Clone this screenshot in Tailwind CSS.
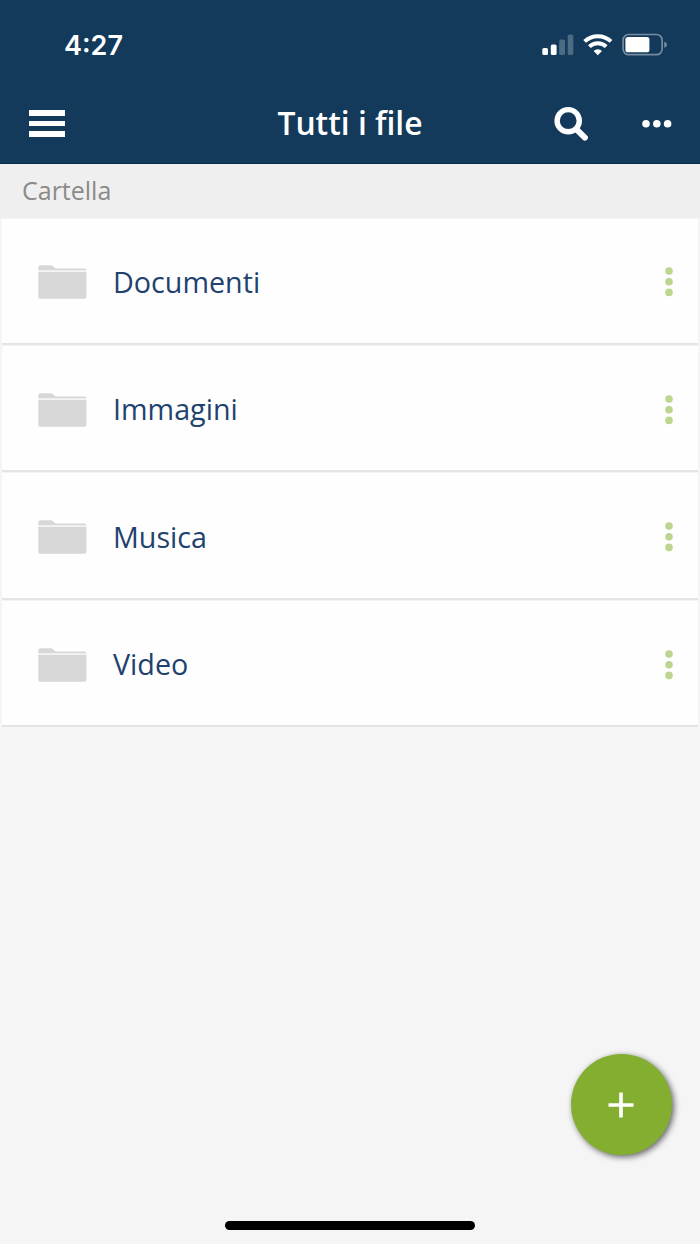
<!DOCTYPE html>
<html lang="it">
  <head>
    <meta charset="utf-8" />
    <title>Tutti i file</title>
    <script src="https://cdn.jsdelivr.net/npm/@tailwindcss/browser@4"></script>
  </head>
  <body class="bg-[#f5f5f5]">
    <div class="relative flex flex-col w-[700px] h-[1244px] overflow-hidden bg-[#f5f5f5] font-['Open_Sans',sans-serif]">
      <header class="h-[164px] shrink-0 bg-[#133a5b] text-white border-b border-[#0b2d4d]">
        <!-- Status bar -->
        <div class="flex items-center justify-between h-[84px] pt-[5px] pl-[64px] pr-[32px]">
          <span class="font-['Inter',sans-serif] text-[27px] leading-8 font-semibold pt-[2px]">4:27</span>
          <div class="flex items-center">
            <svg class="w-[32px] h-[22px]" viewBox="0 0 32 22" fill="#fff">
              <rect x="0.3" y="14" width="5.7" height="7" rx="1.6" />
              <rect x="8.8" y="10.4" width="5.8" height="10.6" rx="1.6" />
              <rect x="17.2" y="5.4" width="5.8" height="15.6" rx="1.6" opacity=".25" />
              <rect x="25.7" y="0.6" width="5.6" height="20.4" rx="1.6" opacity=".25" />
            </svg>
            <svg class="w-[30px] h-[24px] ml-[9px]" viewBox="0 0 30 24" fill="none" stroke="#fff" stroke-width="4">
              <path d="M1.6 8.4a19.2 19.2 0 0 1 26.4 0" />
              <path d="M6.4 13.6a12.2 12.2 0 0 1 16.8 0" />
              <path d="M10.6 18a6.2 6.2 0 0 1 8.4 0L14.8 22.2z" fill="#fff" stroke="none" />
            </svg>
            <svg class="w-[46px] h-[24px] ml-[9px]" viewBox="0 0 46 24">
              <rect x="1.1" y="1.5" width="39" height="20.2" rx="5.6" fill="none" stroke="#fff" stroke-opacity=".42" stroke-width="1.7" />
              <rect x="3.4" y="3.9" width="24" height="15.4" rx="2.6" fill="#fff" />
              <path d="M42.3 8.7c3.4 1 3.4 5 0 6z" fill="#fff" fill-opacity=".45" />
            </svg>
          </div>
        </div>
        <!-- Nav bar -->
        <div class="grid grid-cols-[1fr_auto_1fr] items-center h-[79px] pl-[29px] pr-[28px]">
          <button class="flex flex-col gap-[5px] w-9">
            <span class="w-9 h-[5.7px] bg-white"></span>
            <span class="w-9 h-[5.7px] bg-white"></span>
            <span class="w-9 h-[5.7px] bg-white"></span>
          </button>
          <h1 class="text-[31.8px] leading-10 font-semibold whitespace-nowrap -mt-px -ml-px">Tutti i file</h1>
          <div class="flex items-center justify-end gap-[53px]">
            <svg class="w-[36px] h-[36px]" viewBox="0 0 36 36" fill="none" stroke="#fff">
              <circle cx="15.2" cy="14.7" r="11.1" stroke-width="5.4" />
              <path d="M23.5 23.3l8.4 8.3" stroke-width="6" stroke-linecap="round" />
            </svg>
            <svg class="w-[30px] h-[8px]" viewBox="0 0 30 8" fill="#fff">
              <circle cx="4" cy="3.8" r="3.8" />
              <circle cx="14.8" cy="3.8" r="3.8" />
              <circle cx="25.6" cy="3.8" r="3.8" />
            </svg>
          </div>
        </div>
      </header>

      <div class="h-[54px] shrink-0 flex items-center px-[22px] bg-[#efefef] text-[25px] text-[#8a8a8a]">Cartella</div>

      <!-- Folder list -->
      <ul class="mx-[2px] pt-px text-[28.7px] text-[#1f426e]">
        <li class="flex items-center h-[126px] pt-[2px] pl-9 pr-[25px] bg-[#fefefe] border-b-2 border-b-[#e4e4e4]">
          <svg class="w-[49px] h-[34px]" viewBox="0 0 49 34" fill="#d7d7d7">
            <path d="M0.3 5.4V2.5Q0.3.3 2.5.3H12.5Q14 .3 15.2 1.5L16.2 2.5Q17.5 3.5 19 3.5H46.5Q48.5 3.5 48.5 5.4z" />
            <path d="M0.3 7H48.5V31.5Q48.5 33.7 46.3 33.7H2.5Q.3 33.7 .3 31.5z" />
            <path d="M0.3 5.4H48.5V7H.3z" fill="#f3f3f3" />
          </svg>
          <span class="ml-[26px]">Documenti</span>
          <svg class="w-2 h-[30px] ml-auto" viewBox="0 0 8 30" fill="#bdd58e">
            <circle cx="4" cy="4" r="3.8" />
            <circle cx="4" cy="14.7" r="3.8" />
            <circle cx="4" cy="25.4" r="3.8" />
          </svg>
        </li>
        <li class="flex items-center h-[127px] pt-1 pl-9 pr-[25px] bg-[#fefefe] border-t border-t-[#f4f4f4] border-b-2 border-b-[#e4e4e4]">
          <svg class="w-[49px] h-[34px]" viewBox="0 0 49 34" fill="#d7d7d7">
            <path d="M0.3 5.4V2.5Q0.3.3 2.5.3H12.5Q14 .3 15.2 1.5L16.2 2.5Q17.5 3.5 19 3.5H46.5Q48.5 3.5 48.5 5.4z" />
            <path d="M0.3 7H48.5V31.5Q48.5 33.7 46.3 33.7H2.5Q.3 33.7 .3 31.5z" />
            <path d="M0.3 5.4H48.5V7H.3z" fill="#f3f3f3" />
          </svg>
          <span class="ml-[26px] -mt-[2px]">Immagini</span>
          <svg class="w-2 h-[30px] ml-auto" viewBox="0 0 8 30" fill="#bdd58e">
            <circle cx="4" cy="4" r="3.8" />
            <circle cx="4" cy="14.7" r="3.8" />
            <circle cx="4" cy="25.4" r="3.8" />
          </svg>
        </li>
        <li class="flex items-center h-[127.5px] pt-1 pl-9 pr-[25px] bg-[#fefefe] border-t border-t-[#f4f4f4] border-b-2 border-b-[#e4e4e4]">
          <svg class="w-[49px] h-[34px]" viewBox="0 0 49 34" fill="#d7d7d7">
            <path d="M0.3 5.4V2.5Q0.3.3 2.5.3H12.5Q14 .3 15.2 1.5L16.2 2.5Q17.5 3.5 19 3.5H46.5Q48.5 3.5 48.5 5.4z" />
            <path d="M0.3 7H48.5V31.5Q48.5 33.7 46.3 33.7H2.5Q.3 33.7 .3 31.5z" />
            <path d="M0.3 5.4H48.5V7H.3z" fill="#f3f3f3" />
          </svg>
          <span class="ml-[26px] -mt-[2px]">Musica</span>
          <svg class="w-2 h-[30px] ml-auto" viewBox="0 0 8 30" fill="#bdd58e">
            <circle cx="4" cy="4" r="3.8" />
            <circle cx="4" cy="14.7" r="3.8" />
            <circle cx="4" cy="25.4" r="3.8" />
          </svg>
        </li>
        <li class="flex items-center h-[127px] pt-1 pl-9 pr-[25px] bg-[#fefefe] border-t border-t-[#f4f4f4] border-b-2 border-b-[#e4e4e4]">
          <svg class="w-[49px] h-[34px]" viewBox="0 0 49 34" fill="#d7d7d7">
            <path d="M0.3 5.4V2.5Q0.3.3 2.5.3H12.5Q14 .3 15.2 1.5L16.2 2.5Q17.5 3.5 19 3.5H46.5Q48.5 3.5 48.5 5.4z" />
            <path d="M0.3 7H48.5V31.5Q48.5 33.7 46.3 33.7H2.5Q.3 33.7 .3 31.5z" />
            <path d="M0.3 5.4H48.5V7H.3z" fill="#f3f3f3" />
          </svg>
          <span class="ml-[26px] -mt-px">Video</span>
          <svg class="w-2 h-[30px] ml-auto" viewBox="0 0 8 30" fill="#bdd58e">
            <circle cx="4" cy="4" r="3.8" />
            <circle cx="4" cy="14.7" r="3.8" />
            <circle cx="4" cy="25.4" r="3.8" />
          </svg>
        </li>
      </ul>

      <!-- Floating add button -->
      <button class="absolute right-[28px] bottom-[89px] size-[101px] rounded-full bg-[#84ae30] flex items-center justify-center shadow-[2px_2px_6px_rgba(0,0,0,0.6)]">
        <svg class="size-[26px] mr-[2px]" viewBox="0 0 26 26" stroke="#fff" stroke-width="3.6">
          <path d="M13 0.5v25M0.5 13h25" />
        </svg>
      </button>

      <!-- Home indicator -->
      <div class="mt-auto mb-[14px] mx-auto w-[250px] h-[9px] rounded-full bg-black"></div>
    </div>
  </body>
</html>
